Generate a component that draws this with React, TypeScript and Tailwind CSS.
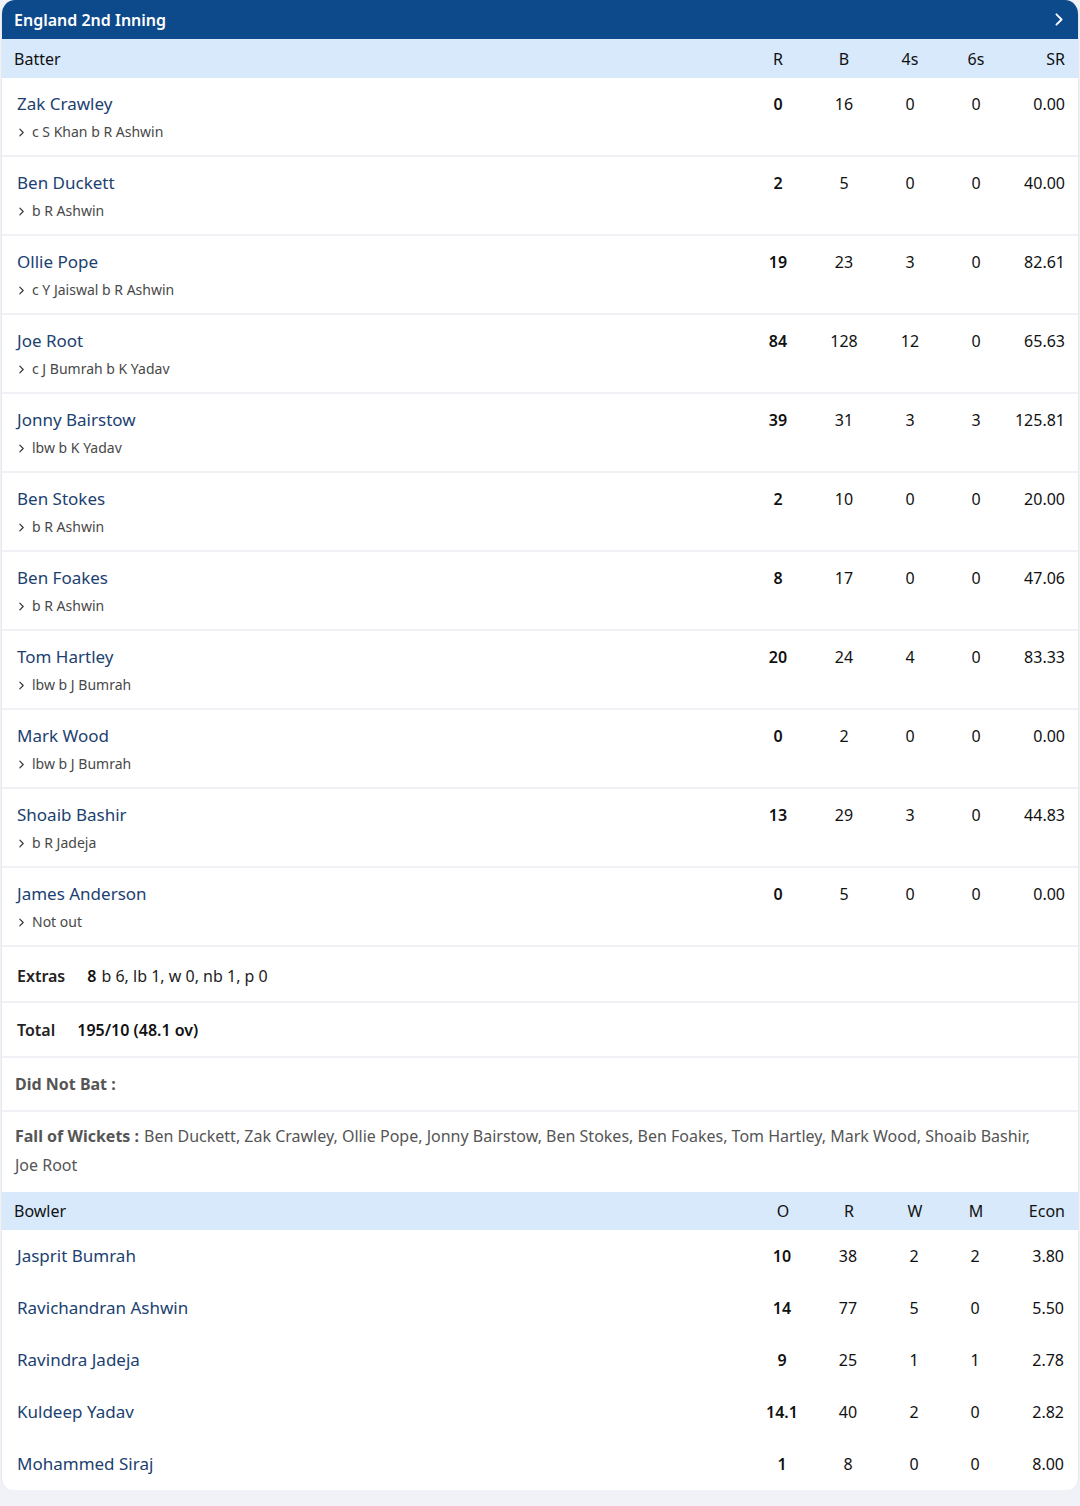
const batters = [
  { name: "Zak Crawley", out: "c S Khan b R Ashwin", r: "0", b: "16", f: "0", s: "0", sr: "0.00" },
  { name: "Ben Duckett", out: "b R Ashwin", r: "2", b: "5", f: "0", s: "0", sr: "40.00" },
  { name: "Ollie Pope", out: "c Y Jaiswal b R Ashwin", r: "19", b: "23", f: "3", s: "0", sr: "82.61" },
  { name: "Joe Root", out: "c J Bumrah b K Yadav", r: "84", b: "128", f: "12", s: "0", sr: "65.63" },
  { name: "Jonny Bairstow", out: "lbw b K Yadav", r: "39", b: "31", f: "3", s: "3", sr: "125.81" },
  { name: "Ben Stokes", out: "b R Ashwin", r: "2", b: "10", f: "0", s: "0", sr: "20.00" },
  { name: "Ben Foakes", out: "b R Ashwin", r: "8", b: "17", f: "0", s: "0", sr: "47.06" },
  { name: "Tom Hartley", out: "lbw b J Bumrah", r: "20", b: "24", f: "4", s: "0", sr: "83.33" },
  { name: "Mark Wood", out: "lbw b J Bumrah", r: "0", b: "2", f: "0", s: "0", sr: "0.00" },
  { name: "Shoaib Bashir", out: "b R Jadeja", r: "13", b: "29", f: "3", s: "0", sr: "44.83" },
  { name: "James Anderson", out: "Not out", r: "0", b: "5", f: "0", s: "0", sr: "0.00" },
];

const bowlers = [
  { name: "Jasprit Bumrah", o: "10", r: "38", w: "2", m: "2", econ: "3.80" },
  { name: "Ravichandran Ashwin", o: "14", r: "77", w: "5", m: "0", econ: "5.50" },
  { name: "Ravindra Jadeja", o: "9", r: "25", w: "1", m: "1", econ: "2.78" },
  { name: "Kuldeep Yadav", o: "14.1", r: "40", w: "2", m: "0", econ: "2.82" },
  { name: "Mohammed Siraj", o: "1", r: "8", w: "0", m: "0", econ: "8.00" },
];

function Chevron({ className }: { className?: string }) {
  return (
    <svg viewBox="0 0 6 10" className={className} fill="none" stroke="currentColor" strokeWidth={1.4}>
      <polyline points="1,1 5,5 1,9" strokeLinecap="round" strokeLinejoin="round" />
    </svg>
  );
}

export default function App() {
  return (
    <div className="min-h-[1506px] bg-[#f1f2f8] pb-4 font-['Noto_Sans',sans-serif] text-[#111]">
      <div className="mx-[1px] overflow-hidden rounded-b-xl rounded-t-[14px] border-x border-[#e6e8f0] bg-white">
        <div className="flex h-[39px] items-center justify-between bg-[#0d4a8b] pl-[12px] pr-[15px]">
          <span className="text-[16px] font-semibold text-white">England 2nd Inning</span>
          <Chevron className="h-[13px] w-[8px] text-white" />
        </div>

        <div className="flex h-[39px] items-center bg-[#d7e9fb] pl-[12px] pr-[13px] text-[16px]">
          <span className="flex-1">Batter</span>
          <span className="w-[66px] text-center">R</span>
          <span className="w-[66px] text-center">B</span>
          <span className="w-[66px] text-center">4s</span>
          <span className="w-[66px] text-center">6s</span>
          <span className="w-[56px] text-right">SR</span>
        </div>

        {batters.map((p) => (
          <div key={p.name} className="flex border-b-2 border-[#f0f1f4] pb-[13px] pl-[15px] pr-[13px] pt-[14px]">
            <div className="flex-1">
              <div className="text-[17px] leading-[24px] text-[#1b4170]">{p.name}</div>
              <div className="mt-[6px] flex items-center text-[14px] leading-[20px] text-[#484848]">
                <Chevron className="ml-[2px] mr-[8px] h-[9px] w-[5px] text-[#333]" />
                {p.out}
              </div>
            </div>
            <span className="w-[66px] text-center text-[16px] font-semibold leading-[24px]">{p.r}</span>
            <span className="w-[66px] text-center text-[16px] leading-[24px]">{p.b}</span>
            <span className="w-[66px] text-center text-[16px] leading-[24px]">{p.f}</span>
            <span className="w-[66px] text-center text-[16px] leading-[24px]">{p.s}</span>
            <span className="w-[56px] text-right text-[16px] leading-[24px]">{p.sr}</span>
          </div>
        ))}

        <div className="flex h-[56px] items-center border-b-2 border-[#f0f1f4] pl-[15px] pt-[4px] text-[16px]">
          <span className="font-semibold text-[#222]">Extras</span>
          <span className="ml-[22px] font-semibold">8</span>
          <span className="ml-[5px] text-[#222]">b 6, lb 1, w 0, nb 1, p 0</span>
        </div>

        <div className="flex h-[55px] items-center border-b-2 border-[#f0f1f4] pl-[15px] text-[16px]">
          <span className="font-semibold text-[#222]">Total</span>
          <span className="ml-[22px] font-semibold">195/10 (48.1 ov)</span>
        </div>

        <div className="flex h-[54px] items-center border-b-2 border-[#f0f1f4] pl-[13px] text-[16px] font-bold text-[#555]">
          Did Not Bat :
        </div>

        <div className="h-[80px] pl-[13px] pr-[14px] pt-[10px] text-[16px] leading-[29px] text-[#555]">
          <div className="flex whitespace-nowrap">
            <b className="mr-[5px] font-bold">Fall of Wickets :</b>
            <span>
              Ben Duckett, Zak Crawley, Ollie Pope, Jonny Bairstow, Ben Stokes, Ben Foakes, Tom Hartley, Mark Wood,
              Shoaib Bashir,
            </span>
          </div>
          <div>Joe Root</div>
        </div>

        <div className="flex h-[38px] items-center bg-[#d7e9fb] pl-[12px] pr-[13px] text-[16px]">
          <span className="flex-1">Bowler</span>
          <span className="w-[66px] text-center">O</span>
          <span className="w-[66px] text-center">R</span>
          <span className="w-[66px] text-center">W</span>
          <span className="w-[56px] text-center">M</span>
          <span className="w-[61px] text-right">Econ</span>
        </div>

        {bowlers.map((p) => (
          <div key={p.name} className="flex h-[52px] items-center pl-[15px] pr-[14px] text-[16px]">
            <span className="flex-1 text-[17px] text-[#1b4170]">{p.name}</span>
            <span className="w-[66px] text-center font-semibold">{p.o}</span>
            <span className="w-[66px] text-center">{p.r}</span>
            <span className="w-[66px] text-center">{p.w}</span>
            <span className="w-[56px] text-center">{p.m}</span>
            <span className="w-[61px] text-right">{p.econ}</span>
          </div>
        ))}
      </div>
    </div>
  );
}
